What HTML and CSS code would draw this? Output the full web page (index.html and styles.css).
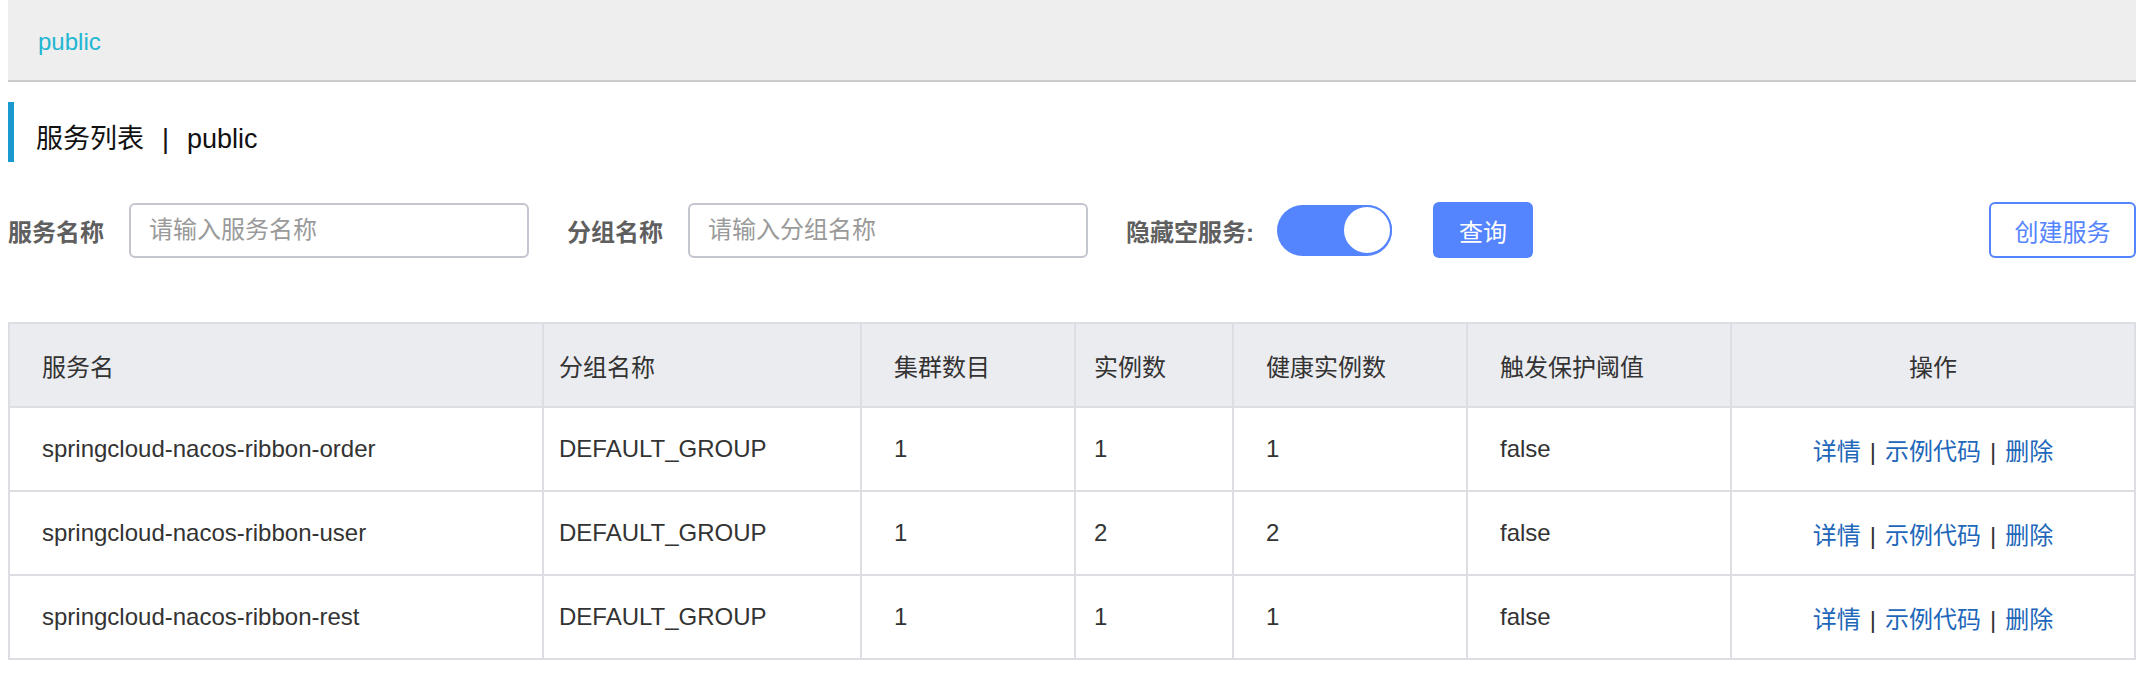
FILE: index.html
```html
<!DOCTYPE html>
<html lang="zh-CN">
<head>
<meta charset="utf-8">
<title>服务列表</title>
<link rel="stylesheet" href="styles.css">
</head>
<body>
<div class="page">
  <div class="ns-bar"><span class="ns-item">public</span></div>

  <div class="page-title"><span class="title-text">服务列表</span><span class="title-sep">|</span><span class="title-text">public</span></div>

  <div class="filter-row">
    <div class="form-item">
      <label class="form-label">服务名称</label>
      <input class="text-input" type="text" placeholder="请输入服务名称">
    </div>
    <div class="form-item">
      <label class="form-label">分组名称</label>
      <input class="text-input" type="text" placeholder="请输入分组名称">
    </div>
    <div class="form-item form-item-switch">
      <label class="form-label form-label-narrow">隐藏空服务:</label>
      <span class="switch"><span class="switch-knob"></span></span>
    </div>
    <button class="btn btn-primary" type="button">查询</button>
    <button class="btn btn-outline" type="button">创建服务</button>
  </div>

  <table class="svc-table">
    <colgroup>
      <col class="c1"><col class="c2"><col class="c3"><col class="c4"><col class="c5"><col class="c6"><col class="c7">
    </colgroup>
    <thead>
      <tr>
        <th>服务名</th>
        <th class="pad-s">分组名称</th>
        <th>集群数目</th>
        <th class="pad-m">实例数</th>
        <th>健康实例数</th>
        <th>触发保护阈值</th>
        <th class="center">操作</th>
      </tr>
    </thead>
    <tbody>
      <tr>
        <td>springcloud-nacos-ribbon-order</td>
        <td class="pad-s">DEFAULT_GROUP</td>
        <td>1</td>
        <td class="pad-m">1</td>
        <td>1</td>
        <td>false</td>
        <td class="center"><a class="op-link" href="#">详情</a><span class="op-sep">|</span><a class="op-link" href="#">示例代码</a><span class="op-sep">|</span><a class="op-link" href="#">删除</a></td>
      </tr>
      <tr>
        <td>springcloud-nacos-ribbon-user</td>
        <td class="pad-s">DEFAULT_GROUP</td>
        <td>1</td>
        <td class="pad-m">2</td>
        <td>2</td>
        <td>false</td>
        <td class="center"><a class="op-link" href="#">详情</a><span class="op-sep">|</span><a class="op-link" href="#">示例代码</a><span class="op-sep">|</span><a class="op-link" href="#">删除</a></td>
      </tr>
      <tr>
        <td>springcloud-nacos-ribbon-rest</td>
        <td class="pad-s">DEFAULT_GROUP</td>
        <td>1</td>
        <td class="pad-m">1</td>
        <td>1</td>
        <td>false</td>
        <td class="center"><a class="op-link" href="#">详情</a><span class="op-sep">|</span><a class="op-link" href="#">示例代码</a><span class="op-sep">|</span><a class="op-link" href="#">删除</a></td>
      </tr>
    </tbody>
  </table>
</div>
</body>
</html>
```

FILE: styles.css
```css
html, body {
  margin: 0;
  padding: 0;
  background: #ffffff;
}

body {
  font-family: "Liberation Sans", "Noto Sans CJK SC", sans-serif;
  color: #333333;
}

.page {
  padding: 0 14px 0 8px;
}

.ns-bar {
  height: 80px;
  background: #eeeeee;
  border-bottom: 2px solid #cccccc;
  display: flex;
  align-items: center;
  padding-left: 30px;
}

.ns-item {
  font-size: 24px;
  color: #22b6d2;
  line-height: 1;
  margin-top: 4px;
}

.page-title {
  margin-top: 20px;
  height: 60px;
  border-left: 6px solid #1a99cf;
  padding-left: 22px;
  display: flex;
  align-items: center;
  font-size: 27px;
  color: #111111;
}

.title-text {
  line-height: 1;
  margin-top: 14px;
}

.title-sep {
  margin: 14px 18px 0 18px;
  line-height: 1;
}

.filter-row {
  margin-top: 40px;
  display: flex;
  align-items: center;
  height: 56px;
}

.form-item {
  display: flex;
  align-items: center;
  margin-right: 38px;
}

.form-item-switch {
  margin-right: 41px;
}

.form-label {
  font-size: 24px;
  font-weight: bold;
  color: #5f5f5f;
  margin-right: 25px;
  white-space: nowrap;
}

.form-label-narrow {
  margin-right: 23px;
}

.text-input {
  box-sizing: border-box;
  width: 400px;
  height: 55px;
  border: 2px solid #c4c6cf;
  border-radius: 6px;
  padding: 0 18px;
  font-family: inherit;
  font-size: 24px;
  color: #333333;
  outline: none;
  background: #ffffff;
}

.text-input::placeholder {
  color: #9a9a9a;
}

.switch {
  box-sizing: border-box;
  width: 115px;
  height: 51px;
  border-radius: 26px;
  background: #5584ff;
  display: flex;
  justify-content: flex-end;
  align-items: center;
}

.switch-knob {
  box-sizing: border-box;
  width: 50px;
  height: 50px;
  border-radius: 50%;
  background: #ffffff;
  border: 2px solid #5584ff;
}

.btn {
  box-sizing: border-box;
  height: 56px;
  border-radius: 6px;
  font-family: inherit;
  font-size: 24px;
  cursor: pointer;
  padding: 0;
}

.btn-primary {
  width: 100px;
  background: #5584ff;
  color: #ffffff;
  border: none;
}

.btn-outline {
  margin-left: auto;
  width: 147px;
  background: #ffffff;
  color: #5584ff;
  border: 2px solid #5584ff;
}

.svc-table {
  margin-top: 64px;
  width: 100%;
  border-collapse: collapse;
  table-layout: fixed;
  font-size: 24px;
  color: #333333;
}

.c1 { width: 534px; }
.c2 { width: 318px; }
.c3 { width: 214px; }
.c4 { width: 158px; }
.c5 { width: 234px; }
.c6 { width: 264px; }
.c7 { width: 404px; }

.svc-table th,
.svc-table td {
  border: 2px solid #dcdee3;
  padding: 0 0 0 32px;
  text-align: left;
  font-weight: normal;
  white-space: nowrap;
  height: 82px;
}

.svc-table th {
  background: #ebecf0;
}

.svc-table .pad-s {
  padding-left: 15px;
}

.svc-table .pad-m {
  padding-left: 18px;
}

.svc-table .center {
  text-align: center;
  padding: 0;
}

.op-link {
  color: #2167b9;
  text-decoration: none;
}

.op-sep {
  margin: 0 9px;
  color: #333333;
}
```
